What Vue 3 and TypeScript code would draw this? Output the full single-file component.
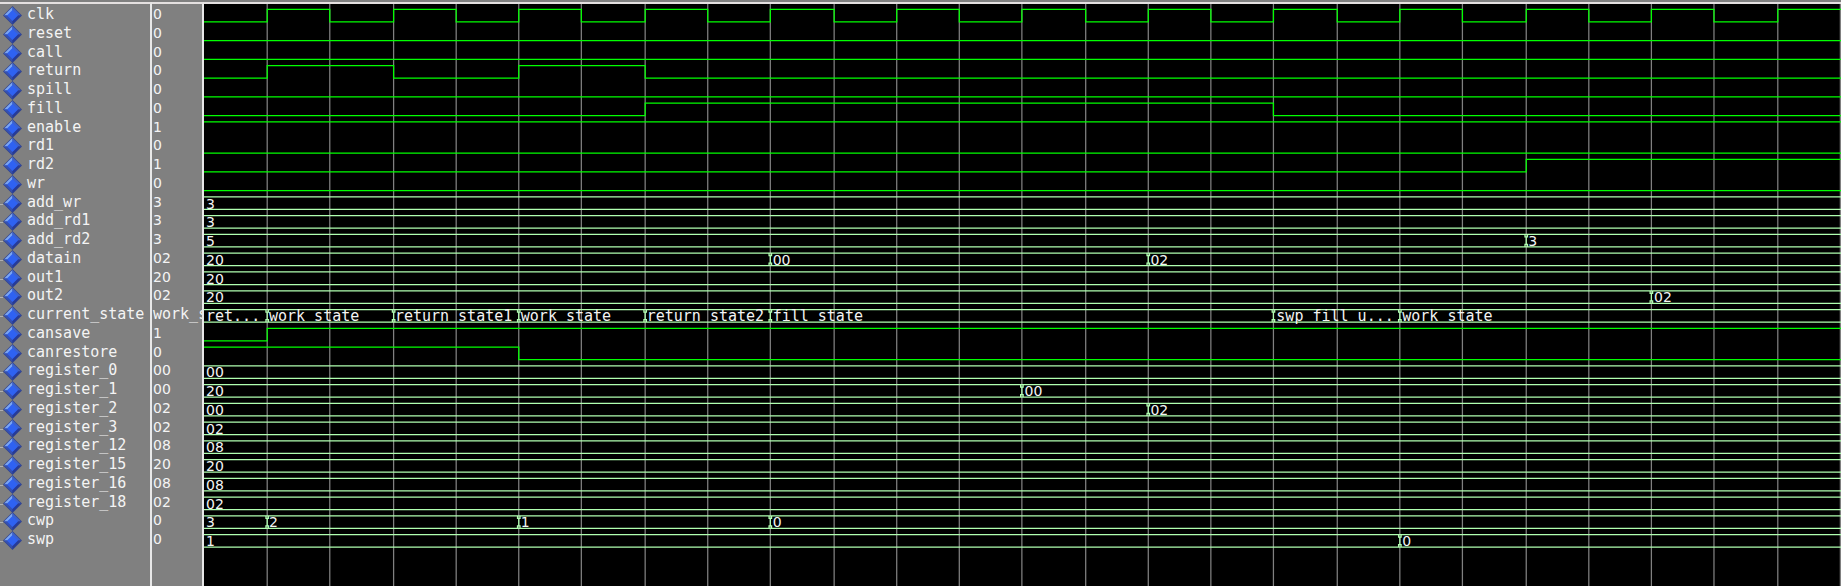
<script setup lang="ts">
interface Step { at: number; value: string }
interface Signal { name: string; value: string; bus: boolean; steps: Step[] }

const CELLS = 26
const UNIT_WIDTH = 1308
const ROW = 15
const HIGH = 3
const LOW = 13

const parse = (text: string): Step[] =>
  text.split('|').map((part) => {
    const cut = part.indexOf(':')
    return { at: Number(part.slice(0, cut)), value: part.slice(cut + 1) }
  })
const bit = (name: string, value: string, wave: string): Signal => ({ name, value, bus: false, steps: parse(wave) })
const bus = (name: string, value: string, wave: string): Signal => ({ name, value, bus: true, steps: parse(wave) })

const clock = Array.from({ length: CELLS }, (_, i) => `${i}:${i % 2}`).join('|')

const signals: Signal[] = [
  bit('clk', '0', clock),
  bit('reset', '0', '0:0'),
  bit('call', '0', '0:0'),
  bit('return', '0', '0:0|1:1|3:0|5:1|7:0'),
  bit('spill', '0', '0:0'),
  bit('fill', '0', '0:0|7:1|17:0'),
  bit('enable', '1', '0:1'),
  bit('rd1', '0', '0:0'),
  bit('rd2', '1', '0:0|21:1'),
  bit('wr', '0', '0:0'),
  bus('add_wr', '3', '0:3'),
  bus('add_rd1', '3', '0:3'),
  bus('add_rd2', '3', '0:5|21:3'),
  bus('datain', '02', '0:20|9:00|15:02'),
  bus('out1', '20', '0:20'),
  bus('out2', '02', '0:20|23:02'),
  bus('current_state', 'work_state', '0:ret...|1:work state|3:return state1|5:work state|7:return state2|9:fill state|17:swp fill u...|19:work state'),
  bit('cansave', '1', '0:0|1:1'),
  bit('canrestore', '0', '0:1|5:0'),
  bus('register_0', '00', '0:00'),
  bus('register_1', '00', '0:20|13:00'),
  bus('register_2', '02', '0:00|15:02'),
  bus('register_3', '02', '0:02'),
  bus('register_12', '08', '0:08'),
  bus('register_15', '20', '0:20'),
  bus('register_16', '08', '0:08'),
  bus('register_18', '02', '0:02'),
  bus('cwp', '0', '0:3|1:2|5:1|9:0'),
  bus('swp', '0', '0:1|19:0'),
]

const height = signals.length * ROW
const column = (i: number): number => (i === 0 ? 0 : i >= CELLS ? UNIT_WIDTH - 1 : Math.floor(50.27 * i + 0.35))
const bar = (x: number, y: number, w: number, h: number): string => `M${x} ${y}h${w}v${h}h${-w}z`

const bitPath = signals.map((s, row) => s.bus ? '' : s.steps.map((step, i) => {
  const x = column(step.at)
  const next = s.steps[i + 1]
  const end = next ? column(next.at) : UNIT_WIDTH
  const y = row * ROW + (step.value === '1' ? HIGH : LOW)
  const edge = i > 0 ? bar(x, row * ROW + HIGH, 1, LOW - HIGH + 1) : ''
  return bar(x, y, end - x, 1) + edge
}).join('')).join('')

const busPath = signals.map((s, row) => {
  if (!s.bus) return ''
  const top = row * ROW + HIGH
  const rails = bar(0, top, UNIT_WIDTH, 1) + bar(0, top + 10, UNIT_WIDTH, 1)
  const marks = s.steps.slice(1).map((step) => {
    const x = column(step.at)
    return bar(x, top + 2, 1, 7) + bar(x - 1, top + 1, 1, 2) + bar(x + 1, top + 1, 1, 2) +
      bar(x - 1, top + 8, 1, 2) + bar(x + 1, top + 8, 1, 2)
  }).join('')
  return rails + marks
}).join('')

const gridPath = Array.from({ length: CELLS }, (_, i) => bar(column(i + 1), 0, 1, height)).join('')

const place = (s: Signal, i: number) => ({
  gridColumn: `${s.steps[i].at + 1} / ${s.steps[i + 1] ? s.steps[i + 1].at + 1 : CELLS + 1}`,
})
const isNumber = (text: string): boolean => /^\d+$/.test(text)
</script>

<template>
  <main class="viewer">
    <section class="pane names" aria-label="Signals">
      <ul class="rows">
        <li v-for="s in signals" :key="s.name" class="name">
          <span class="stub" :class="{ shown: s.bus }"></span>
          <svg class="gem" viewBox="0 0 19 19" aria-hidden="true">
            <path d="M9.500 0L19 9.500L9.500 19L0 9.500z" fill="#34468c" />
            <path d="M9.500 1L1 9.500L5 9.500L9.500 5z" fill="#7ba6f4" />
            <path d="M9.500 1L18 9.500L14 9.500L9.500 5z" fill="#3d62cc" />
            <path d="M1 9.500L9.500 18L9.500 14L5 9.500z" fill="#3450b4" />
            <path d="M18 9.500L9.500 18L9.500 14L14 9.500z" fill="#263a98" />
            <path d="M9.500 4L15 9.500L9.500 15L4 9.500z" fill="#2f62f2" />
          </svg>
          <span>{{ s.name }}</span>
        </li>
      </ul>
    </section>
    <section class="pane values" aria-label="Values">
      <ul class="rows">
        <li v-for="s in signals" :key="s.name" class="value" :class="{ digits: isNumber(s.value) }">{{ s.value }}</li>
      </ul>
    </section>
    <section class="pane waves" aria-label="Waveforms">
      <div class="plot">
        <svg class="traces" :viewBox="`0 0 ${UNIT_WIDTH} ${height}`" preserveAspectRatio="none" aria-hidden="true">
          <path :d="bitPath" fill="#00ff00" />
          <path :d="busPath" fill="#b0ffb0" />
        </svg>
        <ul class="rows">
          <li v-for="s in signals" :key="s.name" class="lane">
            <template v-if="s.bus">
              <span
                v-for="(step, i) in s.steps"
                :key="step.at"
                class="label"
                :class="{ digits: isNumber(step.value) }"
                :style="place(s, i)"
              >{{ step.value }}</span>
            </template>
          </li>
        </ul>
      </div>
      <svg class="grid" :viewBox="`0 0 ${UNIT_WIDTH} ${height}`" preserveAspectRatio="none" aria-hidden="true">
        <path :d="gridPath" fill="#808080" />
      </svg>
    </section>
  </main>
</template>

<style>
body {
  margin: 0;
  background: #808080;
}
</style>

<style scoped>
.viewer {
  display: grid;
  grid-template-columns: 152px 52px 1fr;
  min-height: 100vh;
  background: #808080;
  color: #f4f4f4;
  font: 15px/18px "DejaVu Sans Mono", monospace;
}
.pane {
  position: relative;
  box-sizing: border-box;
  min-width: 0;
  padding-top: 1px;
  border-top: 2px solid #e4e0e0;
  margin-top: 2px;
}
.names,
.values {
  border-right: 2px solid #e8e8e8;
}
.rows {
  display: grid;
  grid-template-rows: repeat(29, minmax(0, 1fr));
  height: 544px;
  margin: 0;
  padding: 0;
  list-style: none;
}
.name {
  display: flex;
  align-items: flex-start;
  white-space: nowrap;
}
.stub {
  flex: none;
  width: 3px;
  height: 1px;
  margin-top: 11px;
}
.stub.shown {
  background: #b0b0b0;
}
.gem {
  flex: none;
  width: 19px;
  height: 19px;
  margin-top: 1px;
  margin-right: 5px;
}
.value {
  overflow: hidden;
  padding-left: 1px;
  white-space: nowrap;
}
.digits {
  font-family: "DejaVu Sans", sans-serif;
  font-size: 14px;
}
.waves {
  background: #000;
}
.plot {
  position: relative;
  z-index: 1;
}
.traces,
.grid {
  position: absolute;
  top: 0;
  left: 0;
  width: 100%;
  height: 100%;
}
.lane {
  position: relative;
  display: grid;
  grid-template-columns: repeat(26, minmax(0, 1fr));
}
.label {
  padding-top: 2px;
  padding-left: 2px;
  white-space: nowrap;
}
</style>
